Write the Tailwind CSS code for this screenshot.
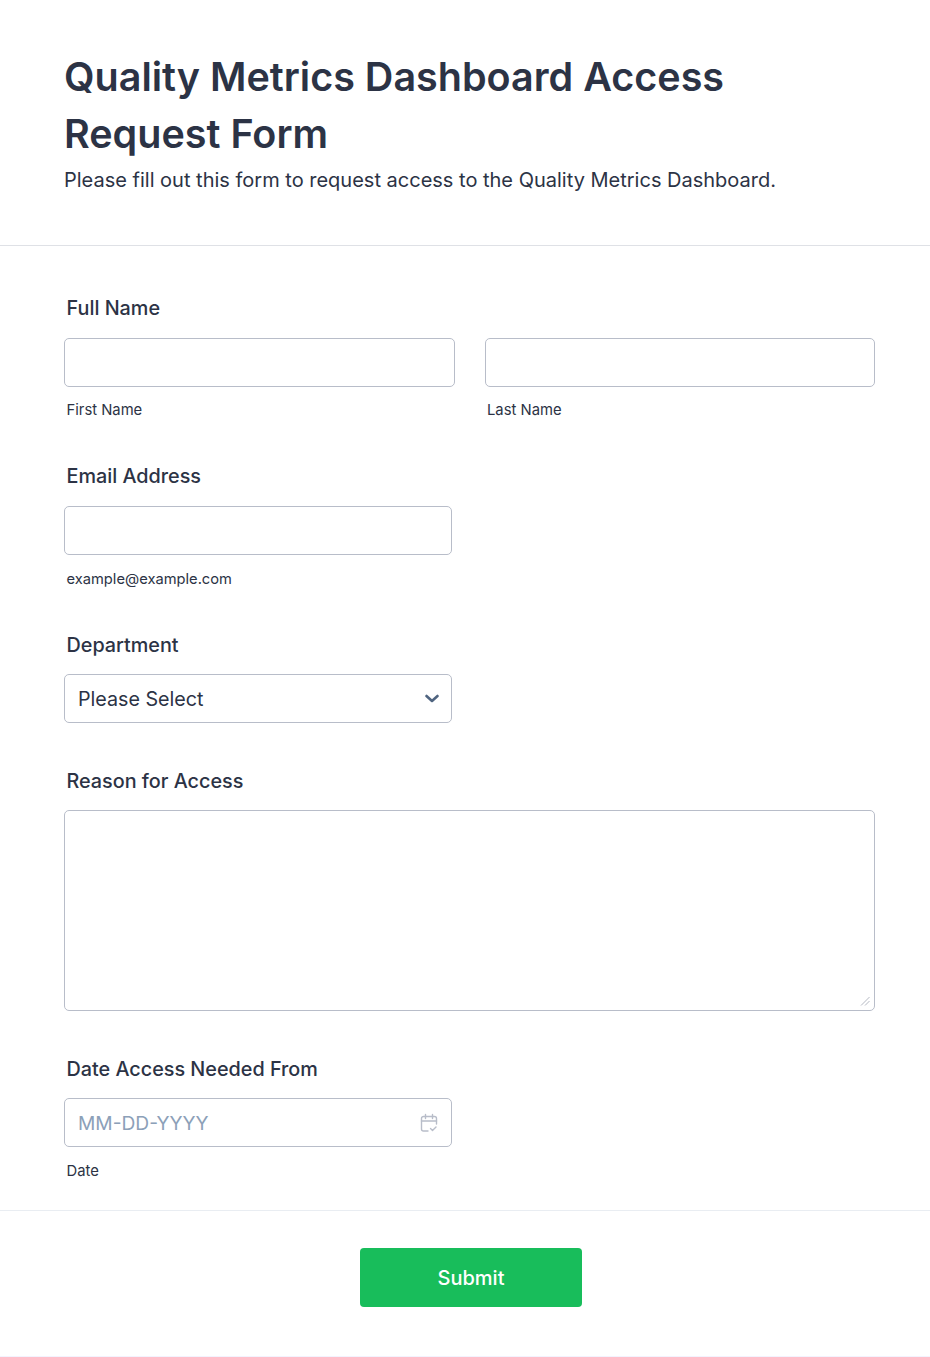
<!DOCTYPE html>
<html lang="en">
<head>
  <meta charset="UTF-8">
  <meta name="viewport" content="width=device-width, initial-scale=1.0">
  <title>Quality Metrics Dashboard Access Request Form</title>
  <script src="https://cdn.jsdelivr.net/npm/@tailwindcss/browser@4"></script>
</head>
<body class="bg-white font-['Inter',sans-serif] text-[#2c3345]">
  <div class="w-[930px] h-[1357px] flex flex-col border-b border-[#f3f3fe]">
    <!-- Header -->
    <header class="h-[246px] border-b border-[#dfe1e6] pl-[64px] pt-[49px]">
      <h1 class="text-[39.5px] font-semibold leading-[57px] w-[760px]">Quality Metrics Dashboard Access Request Form</h1>
      <p class="text-[20px] leading-[29px] mt-[3px]">Please fill out this form to request access to the Quality Metrics Dashboard.</p>
    </header>

    <!-- Fields -->
    <main class="h-[964px] pl-[64px] pt-[50px] flex flex-col">
      <section class="h-[168px]">
        <label class="block text-[19.8px] font-medium leading-[24px] pl-[2.500px]">Full Name</label>
        <div class="flex gap-[30.500px] mt-[18px]">
          <div class="w-[390.500px]">
            <input type="text" class="block w-full h-[49px] rounded-[5px] border border-[#b8bdc9] bg-white">
            <span class="block text-[14.800px] leading-[18px] pl-[2.500px] mt-[14px]">First Name</span>
          </div>
          <div class="w-[390px]">
            <input type="text" class="block w-full h-[49px] rounded-[5px] border border-[#b8bdc9] bg-white">
            <span class="block text-[14.800px] leading-[18px] pl-[2px] mt-[14px]">Last Name</span>
          </div>
        </div>
      </section>

      <section class="h-[169px]">
        <label class="block text-[19.8px] font-medium leading-[24px] pl-[2.500px]">Email Address</label>
        <input type="email" class="block w-[388px] h-[49px] mt-[18px] rounded-[5px] border border-[#b8bdc9] bg-white">
        <span class="block text-[14.700px] leading-[18px] pl-[2.500px] mt-[15px]">example@example.com</span>
      </section>

      <section class="h-[136px]">
        <label class="block text-[19.8px] font-medium leading-[24px] pl-[2.500px]">Department</label>
        <div class="relative w-[388px] h-[49px] mt-[17px] pt-[2px] rounded-[5px] border border-[#b8bdc9] bg-white flex items-center pl-[13px] text-[19.700px]">
          Please Select
          <svg class="absolute right-[12px] top-[19px]" width="14" height="10" viewBox="0 0 14 10" fill="none"><path d="M1.500 2l5.500 5 5.500-5" stroke="#4f6480" stroke-width="2.600" stroke-linecap="round" stroke-linejoin="round"/></svg>
        </div>
      </section>

      <section class="h-[288px]">
        <label class="block text-[19.8px] font-medium leading-[24px] pl-[2.500px]">Reason for Access</label>
        <div class="relative w-[811px] h-[201px] mt-[17px]">
          <textarea class="block w-full h-full rounded-[5px] border border-[#b8bdc9] bg-white resize-none"></textarea>
          <svg class="absolute right-[5px] bottom-[5px]" width="10" height="10" viewBox="0 0 10 10" fill="none" stroke="#b4b8c2" stroke-width="1"><path d="M1 9.500L9.500 1M5 9.500L9.500 5"/></svg>
        </div>
      </section>

      <section>
        <label class="block text-[19.8px] font-medium leading-[24px] pl-[2.500px]">Date Access Needed From</label>
        <div class="relative w-[388px] h-[49px] mt-[17px] pt-[2px] rounded-[5px] border border-[#b8bdc9] bg-white flex items-center pl-[13px] text-[19.200px] text-[#8ca0b8]">
          MM-DD-YYYY
          <svg class="absolute right-[12px] top-[14px]" width="20" height="20" viewBox="0 0 20 20" fill="none" stroke="#b8bdc9" stroke-width="1.400" stroke-linecap="round" stroke-linejoin="round"><path d="M9 18H4.500A2 2 0 0 1 2.500 16V5.500a2 2 0 0 1 2-2h11a2 2 0 0 1 2 2V11"/><path d="M2.500 8h15M6.500 1.500v4M13.500 1.500v4"/><path d="M11.500 15.500l2 2 3.500-3.500"/></svg>
        </div>
        <span class="block text-[14.800px] leading-[18px] pl-[2.500px] mt-[15px]">Date</span>
      </section>
    </main>

    <!-- Footer -->
    <footer class="border-t border-[#e9edf2] flex justify-center pt-[37px] pl-[12px]">
      <button class="w-[222px] h-[59px] rounded bg-[#18bd5b] text-white text-[20px] font-medium">Submit</button>
    </footer>
  </div>
</body>
</html>
